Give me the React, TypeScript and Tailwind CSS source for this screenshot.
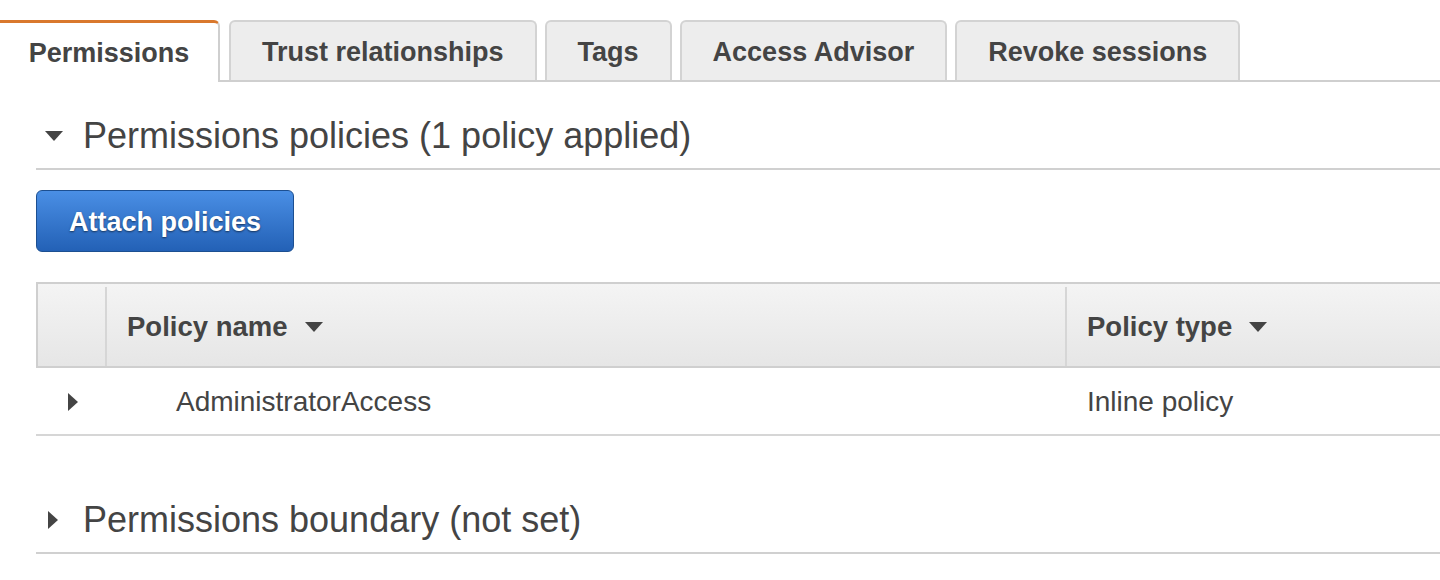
import { ReactNode } from "react";

const TABS = ["Trust relationships", "Tags", "Access Advisor", "Revoke sessions"];

function CaretDown({ className = "" }: { className?: string }) {
  return (
    <svg viewBox="0 0 18 10" className={className} aria-hidden="true">
      <path d="M0 0h18L9 10z" fill="currentColor" />
    </svg>
  );
}

function CaretRight({ className = "" }: { className?: string }) {
  return (
    <svg viewBox="0 0 10 18" className={className} aria-hidden="true">
      <path d="M0 0l10 9-10 9z" fill="currentColor" />
    </svg>
  );
}

function SectionHeading({ open, children }: { open: boolean; children: ReactNode }) {
  return (
    <div className="flex items-center border-b-2 border-[#d0d0d0] pb-[11px]">
      <span className="flex w-[47px] justify-start pl-[9px] pt-[2px]">
        {open ? (
          <CaretDown className="h-[10px] w-[18px] text-[#444]" />
        ) : (
          <CaretRight className="ml-[3px] h-[18px] w-[10px] text-[#444]" />
        )}
      </span>
      <h2 className="pt-[3px] text-[36px] leading-[42px] text-[#444]">{children}</h2>
    </div>
  );
}

export default function App() {
  return (
    <div className="h-[580px] w-full overflow-hidden bg-white text-[#444] [font-family:'Liberation_Sans',Arial,sans-serif]">
      {/* tab strip */}
      <div className="flex pt-[20px]">
        <div className="flex h-[62px] w-[220px] items-center justify-center rounded-tr-[6px] border-t-[3px] border-r-2 border-t-[#d9782d] border-r-[#cfcfcf] bg-white pt-[2px]">
          <span className="text-[27px] font-bold">Permissions</span>
        </div>
        <div className="flex flex-1 items-end gap-[8px] border-b-2 border-[#cfcfcf] pl-[9px]">
          {TABS.map((tab) => (
            <div
              key={tab}
              className="flex h-[60px] items-center rounded-t-[6px] border-x-2 border-t-2 border-[#d3d3d3] bg-[#ededed] px-[31px] pt-[3px]"
            >
              <span className="text-[27px] font-bold">{tab}</span>
            </div>
          ))}
        </div>
      </div>

      <div className="pl-[36px]">
        {/* Permissions policies */}
        <div className="pt-[30px]">
          <SectionHeading open>Permissions policies (1 policy applied)</SectionHeading>
        </div>

        <button
          type="button"
          className="mt-[20px] h-[62px] w-[258px] rounded-[6px] border border-[#1c4f91] bg-gradient-to-b from-[#4a8fe5] to-[#2361b6] pt-[3px] text-[27px] font-bold text-white [text-shadow:0_1px_2px_rgba(0,0,0,0.55)]"
        >
          Attach policies
        </button>

        {/* policies table */}
        <div className="mt-[30px]">
          <div className="flex h-[86px] border-y-2 border-l-2 border-[#cfcfcf] bg-gradient-to-b from-[#f4f4f4] to-[#e6e6e6] pt-[3px]">
            <div className="w-[69px] border-r-2 border-[#d6d6d6]" />
            <div className="flex w-[960px] items-center gap-[17px] border-r-2 border-[#d6d6d6] pl-[20px]">
              <span className="text-[27.5px] font-bold">Policy name</span>
              <CaretDown className="h-[10px] w-[18px] text-[#444]" />
            </div>
            <div className="flex flex-1 items-center gap-[17px] pl-[20px]">
              <span className="text-[27.5px] font-bold">Policy type</span>
              <CaretDown className="h-[10px] w-[18px] text-[#444]" />
            </div>
          </div>
          <div className="flex h-[68px] items-center border-b-2 border-[#d6d6d6] pt-[2px]">
            <div className="flex w-[71px] justify-start pl-[32px]">
              <CaretRight className="h-[18px] w-[10px] text-[#444]" />
            </div>
            <div className="w-[960px] pl-[69px] text-[28px]">AdministratorAccess</div>
            <div className="pl-[20px] text-[28px]">Inline policy</div>
          </div>
        </div>

        {/* Permissions boundary */}
        <div className="pt-[60px]">
          <SectionHeading open={false}>Permissions boundary (not set)</SectionHeading>
        </div>
      </div>
    </div>
  );
}
